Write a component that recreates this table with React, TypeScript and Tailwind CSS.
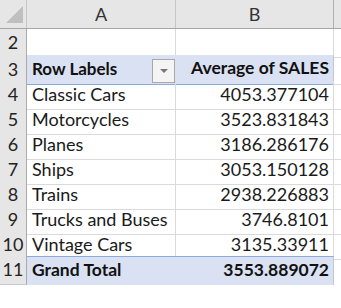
import React from "react";

const rows = [
  { n: "4", label: "Classic Cars", value: "4053.377104" },
  { n: "5", label: "Motorcycles", value: "3523.831843" },
  { n: "6", label: "Planes", value: "3186.286176" },
  { n: "7", label: "Ships", value: "3053.150128" },
  { n: "8", label: "Trains", value: "2938.226883" },
  { n: "9", label: "Trucks and Buses", value: "3746.8101" },
  { n: "10", label: "Vintage Cars", value: "3135.33911" },
];

const font = { fontFamily: "Lato, 'Open Sans', sans-serif" };

function RowNum({ n }: { n: string }) {
  return (
    <div className="flex items-end justify-center pb-[1px] bg-[#e6e6e6] border-r border-b border-r-[#ababab] border-b-[#c8c8c8] text-[#222] text-[18px]">
      {n}
    </div>
  );
}

export default function App() {
  return (
    <div className="w-[341px] h-[308px] bg-white overflow-hidden" style={font}>
      {/* column headers */}
      <div className="grid grid-cols-[27px_149px_158px_1fr] h-[29px] bg-[#e6e6e6] border-b border-[#a6a6a6]">
        <div className="relative border-r border-[#c6c6c6]">
          <svg className="absolute left-[6px] top-[6px]" width="17" height="17" viewBox="0 0 17 17">
            <polygon points="17,0 17,17 0,17" fill="#bfbfbf" />
          </svg>
        </div>
        <div className="flex items-center justify-center border-r border-[#c6c6c6] text-[18px] text-[#333]">A</div>
        <div className="flex items-center justify-center border-r border-[#b0b0b0] text-[18px] text-[#333]">B</div>
        <div />
      </div>

      {/* row 2 */}
      <div className="grid grid-cols-[27px_149px_158px_1fr] h-[26px]">
        <RowNum n="2" />
        <div className="border-r border-b border-[#dadada]" />
        <div className="border-r border-b border-[#dadada]" />
        <div className="border-b border-[#dadada]" />
      </div>

      {/* row 3 pivot header */}
      <div className="grid grid-cols-[27px_149px_158px_1fr] h-[26px]">
        <RowNum n="3" />
        <div className="flex items-end justify-between bg-[#d9e1f2] border-b border-[#8ea9db] pl-[5px] pb-[3px] text-[17px] font-bold text-[#111]">
          <span>Row Labels</span>
          <div className="mb-[-2px] mr-[1px] w-[23px] h-[24px] bg-[#f4f4f4] border border-[#a8a8a8] flex items-center justify-center">
            <svg width="8" height="5" viewBox="0 0 8 5">
              <polygon points="0,0 8,0 4,4" fill="#777" />
            </svg>
          </div>
        </div>
        <div className="flex items-end justify-end bg-[#d9e1f2] border-b border-[#8ea9db] border-r border-r-[#c0c8d8] pr-[4px] pb-[3px] text-[17.5px] font-bold text-[#111]">
          Average of SALES
        </div>
        <div className="border-b border-[#dadada]" />
      </div>

      {/* data rows */}
      {rows.map((r) => (
        <div key={r.n} className="grid grid-cols-[27px_149px_158px_1fr] h-[25px]">
          <RowNum n={r.n} />
          <div className="flex items-end border-r border-b border-[#dadada] pl-[5px] pb-[1px] text-[18px] text-[#1a1a1a]">
            {r.label}
          </div>
          <div className="flex items-end justify-end border-r border-b border-[#dadada] pr-[4px] pb-[1px] text-[18px] text-[#1a1a1a]">
            {r.value}
          </div>
          <div className="border-b border-[#dadada]" />
        </div>
      ))}

      {/* grand total */}
      <div className="grid grid-cols-[27px_149px_158px_1fr] h-[26px]">
        <RowNum n="11" />
        <div className="flex items-end bg-[#d9e1f2] border-t border-[#8ea9db] pl-[5px] pb-[2px] text-[17.5px] font-bold text-[#111]">
          Grand Total
        </div>
        <div className="flex items-end justify-end bg-[#d9e1f2] border-t border-[#8ea9db] border-r border-r-[#c0c8d8] pr-[4px] pb-[2px] text-[17.5px] font-bold text-[#111]">
          3553.889072
        </div>
        <div />
      </div>
    </div>
  );
}
